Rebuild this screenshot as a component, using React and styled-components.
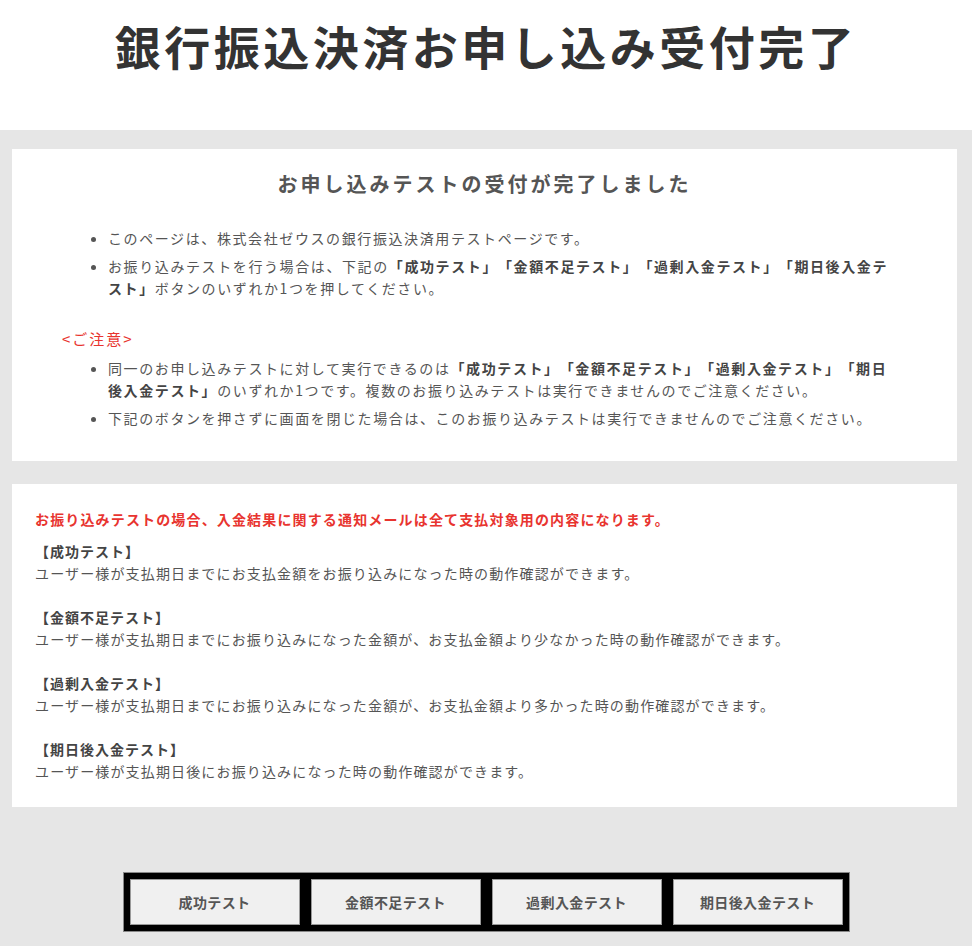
import React from 'react'
import styled, { createGlobalStyle } from 'styled-components'

const GlobalStyle = createGlobalStyle`
  html, body {
    margin: 0;
    padding: 0;
    background-color: #e6e6e6;
    font-family: "Noto Sans CJK JP", "Noto Sans", sans-serif;
    color: #555;
    text-spacing-trim: space-all;
  }
`;

const Page = styled.div`
  width: 972px;
  min-height: 946px;
  background-color: #e6e6e6;
`;

const Header = styled.header`
  height: 130px;
  background-color: #fff;
  padding-top: 15px;
  box-sizing: border-box;
`;

const Title = styled.h1`
  margin: 0;
  text-align: center;
  font-size: 46px;
  line-height: 60px;
  letter-spacing: 3.5px;
  font-weight: 700;
  color: #333;
`;

const Main = styled.main`
  padding: 19px 15px 0 12px;
  display: flex;
  flex-direction: column;
  gap: 23px;
`;

const Card = styled.section`
  background-color: #fff;
  padding: ${props => props.pad};
`;

const CardTitle = styled.h2`
  margin: 0;
  text-align: center;
  font-size: 20px;
  line-height: 30px;
  letter-spacing: 3px;
  font-weight: 700;
  color: #555;
`;

const List = styled.ul`
  margin: ${props => props.mt} 0 0;
  padding: 0 14px 0 46px;
  list-style: disc;
`;

const Item = styled.li`
  font-size: 14px;
  line-height: 22px;
  letter-spacing: 1.6px;
  margin-bottom: 6px;
  color: #555;
  word-break: break-all;
  text-spacing-trim: space-all;

  &:last-child {
    margin-bottom: 0;
  }

  b {
    color: #444;
    font-weight: 700;
  }
`;

const Caution = styled.p`
  margin: 29px 0 0;
  font-size: 15px;
  line-height: 22px;
  letter-spacing: 2px;
  color: #e8342f;
`;

const Notice = styled.p`
  margin: 0 0 10px;
  font-size: 14px;
  line-height: 22px;
  letter-spacing: 1.15px;
  font-weight: 700;
  color: #e8342f;
`;

const Block = styled.div`
  margin-bottom: 22px;

  &:last-child {
    margin-bottom: 0;
  }
`;

const BlockHead = styled.p`
  margin: 0;
  font-size: 14px;
  line-height: 22px;
  letter-spacing: 1px;
  font-weight: 700;
  color: #444;
`;

const BlockText = styled.p`
  margin: 0;
  font-size: 14px;
  line-height: 22px;
  letter-spacing: 1.15px;
  color: #555;
`;

const ButtonArea = styled.div`
  display: flex;
  justify-content: center;
  padding: 66px 0 16px;
`;

const ButtonBar = styled.div`
  display: flex;
  gap: 11px;
  padding: 6px;
  background-color: #000;
  outline: 1px solid #888;
`;

const TestButton = styled.button`
  width: 170px;
  height: 46px;
  background-color: #f0f0f0;
  border: 1px solid #999;
  font-family: "Noto Sans CJK JP", "Noto Sans", sans-serif;
  font-size: 14px;
  font-weight: 700;
  letter-spacing: 0.4px;
  color: #555;
  cursor: pointer;
`;

const tests = [
  { name: '成功テスト', text: 'ユーザー様が支払期日までにお支払金額をお振り込みになった時の動作確認ができます。' },
  { name: '金額不足テスト', text: 'ユーザー様が支払期日までにお振り込みになった金額が、お支払金額より少なかった時の動作確認ができます。' },
  { name: '過剰入金テスト', text: 'ユーザー様が支払期日までにお振り込みになった金額が、お支払金額より多かった時の動作確認ができます。' },
  { name: '期日後入金テスト', text: 'ユーザー様が支払期日後にお振り込みになった時の動作確認ができます。' },
]

const App = () => {
  return (
    <Page>
      <GlobalStyle />
      <Header>
        <Title>銀行振込決済お申し込み受付完了</Title>
      </Header>

      <Main>
        <Card pad="20px 50px 32px">
          <CardTitle>お申し込みテストの受付が完了しました</CardTitle>
          <List mt="28px">
            <Item>このページは、株式会社ゼウスの銀行振込決済用テストページです。</Item>
            <Item>
              お振り込みテストを行う場合は、下記の<b>「成功テスト」「金額不足テスト」「過剰入金テスト」「期日後入金テスト」</b>ボタンのいずれか1つを押してください。
            </Item>
          </List>
          <Caution>&lt;ご注意&gt;</Caution>
          <List mt="7px">
            <Item>
              同一のお申し込みテストに対して実行できるのは<b>「成功テスト」「金額不足テスト」「過剰入金テスト」「期日後入金テスト」</b>のいずれか1つです。複数のお振り込みテストは実行できませんのでご注意ください。
            </Item>
            <Item>下記のボタンを押さずに画面を閉じた場合は、このお振り込みテストは実行できませんのでご注意ください。</Item>
          </List>
        </Card>

        <Card pad="24px 23px 25px">
          <Notice>お振り込みテストの場合、入金結果に関する通知メールは全て支払対象用の内容になります。</Notice>
          {tests.map(t => (
            <Block key={t.name}>
              <BlockHead>【{t.name}】</BlockHead>
              <BlockText>{t.text}</BlockText>
            </Block>
          ))}
        </Card>
      </Main>

      <ButtonArea>
        <ButtonBar>
          {tests.map(t => (
            <TestButton key={t.name}>{t.name}</TestButton>
          ))}
        </ButtonBar>
      </ButtonArea>
    </Page>
  )
}

export default App
